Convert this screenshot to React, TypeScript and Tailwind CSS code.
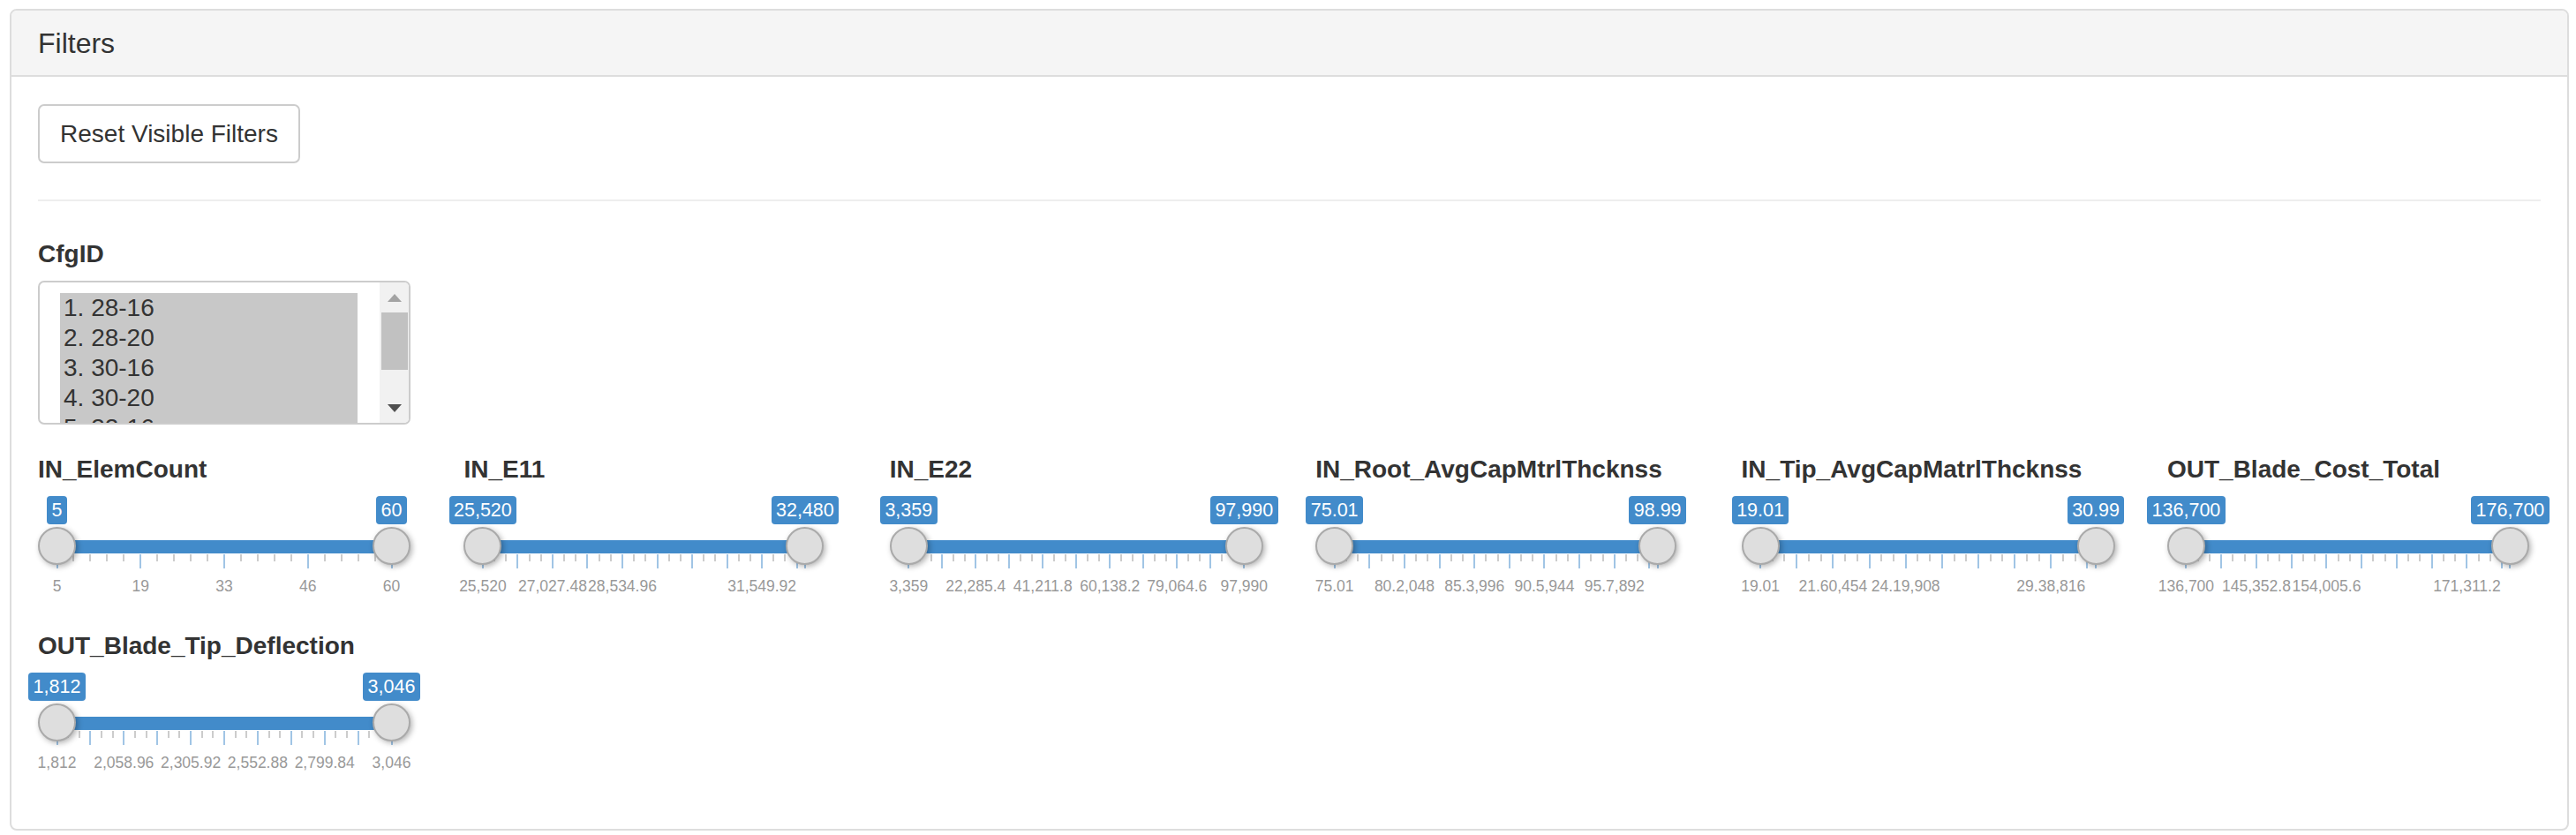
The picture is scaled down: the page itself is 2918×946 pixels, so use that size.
import React from 'react';

type SliderDef = {
  name: string;
  w: number;
  from: string;
  to: string;
  majors: number[];
  minor: number;
  labels: string[];
};

// big tick positions as fractions of the track
const EVEN10 = Array.from({ length: 11 }, (_, k) => k / 10);
const PARTIAL = [...Array.from({ length: 10 }, (_, k) => k * 0.1083), 1];

const SLIDERS: SliderDef[] = [
  { name: 'IN_ElemCount', w: 422, from: '5', to: '60', majors: [0, 0.25, 0.5, 0.75, 1], minor: 4, labels: ['5', '19', '33', '46', '60'] },
  { name: 'IN_E11', w: 408, from: '25,520', to: '32,480', majors: PARTIAL, minor: 2, labels: ['25,520', '', '27,027.48', '', '28,534.96', '', '', '', '31,549.92', '', ''] },
  { name: 'IN_E22', w: 423, from: '3,359', to: '97,990', majors: EVEN10, minor: 2, labels: ['3,359', '', '22,285.4', '', '41,211.8', '', '60,138.2', '', '79,064.6', '', '97,990'] },
  { name: 'IN_Root_AvgCapMtrlThcknss', w: 409, from: '75.01', to: '98.99', majors: PARTIAL, minor: 2, labels: ['75.01', '', '80.2,048', '', '85.3,996', '', '90.5,944', '', '95.7,892', '', ''] },
  { name: 'IN_Tip_AvgCapMatrlThcknss', w: 423, from: '19.01', to: '30.99', majors: PARTIAL, minor: 2, labels: ['19.01', '', '21.60,454', '', '24.19,908', '', '', '', '29.38,816', '', ''] },
  { name: 'OUT_Blade_Cost_Total', w: 410, from: '136,700', to: '176,700', majors: PARTIAL, minor: 2, labels: ['136,700', '', '145,352.8', '', '154,005.6', '', '', '', '171,311.2', '', ''] },
  { name: 'OUT_Blade_Tip_Deflection', w: 422, from: '1,812', to: '3,046', majors: EVEN10, minor: 2, labels: ['1,812', '', '2,058.96', '', '2,305.92', '', '2,552.88', '', '2,799.84', '', '3,046'] },
];

const OPTIONS = ['1. 28-16', '2. 28-20', '3. 30-16', '4. 30-20', '5. 32-16'];

function Badge({ text }: { text: string }) {
  // a 43px slot centred over its handle; a wider badge spills evenly to both sides
  return (
    <div className="flex w-[43px] justify-center">
      <div className="h-[32px] shrink-0 rounded-[4px] bg-[#428bca] px-[5.5px] text-[21.5px] leading-[32px] text-white whitespace-nowrap">
        {text}
      </div>
    </div>
  );
}

function Handle() {
  return <div className="relative z-10 h-[43px] w-[43px] rounded-full border-2 border-[#aaa] bg-[#dedede] shadow-[2px_2px_6px_rgba(0,0,0,0.3)]" />;
}

function RangeSlider({ s }: { s: SliderDef }) {
  const R = 21.5;
  const track = s.w - 2 * R;
  const x = (f: number) => R + f * track;
  const step = s.majors[1] - s.majors[0];
  const minors: number[] = [];
  for (let i = 0; i < s.majors.length - 1; i++) {
    for (let j = 1; j <= s.minor; j++) {
      const p = s.majors[i] + (step * j) / (s.minor + 1);
      if (p < s.majors[i + 1] - 0.001) minors.push(p);
    }
  }

  return (
    <div className="flex flex-col" style={{ width: s.w }}>
      <div className="mt-[2px] flex justify-between">
        <Badge text={s.from} />
        <Badge text={s.to} />
      </div>

      <div className="relative mt-[3px] flex justify-between">
        <div className="absolute top-[15px] h-[15px] bg-[#428bca]" style={{ left: R, width: track }} />
        {/* grid ticks sit under the handles */}
        <div className="absolute left-0 top-[31px] h-[16px] w-full">
          {minors.map((f, i) => (
            <div key={'m' + i} className="absolute top-0 h-[8px] w-[2px] bg-[#cccccc]" style={{ left: x(f) - 1 }} />
          ))}
          {s.majors.map((f, i) => (
            <div key={'M' + i} className="absolute top-0 h-[16px] w-[2px] bg-[#a1c5e5]" style={{ left: x(f) - 1 }} />
          ))}
        </div>
        <Handle />
        <Handle />
      </div>

      <div className="relative mt-[13.5px] h-[20px]">
        {s.majors.map((f, i) =>
          s.labels[i] ? (
            <div key={'l' + i} className="absolute top-0 -translate-x-1/2 text-[17.5px] leading-[20px] text-[#999] whitespace-nowrap" style={{ left: x(f) }}>
              {s.labels[i]}
            </div>
          ) : null
        )}
      </div>
    </div>
  );
}

function FakeListBox() {
  return (
    <div className="mt-[14px] flex h-[163px] w-[422px] overflow-hidden rounded-[7px] border-2 border-[#ccc] bg-white">
      <div className="flex-1 overflow-hidden pl-[23px] pr-[25px] pt-[12px]">
        {OPTIONS.map(o => (
          <div key={o} className="h-[34px] bg-[#c8c8c8] pl-[4px] text-[28px] leading-[34px] text-[#333] whitespace-nowrap">
            {o}
          </div>
        ))}
      </div>
      <div className="flex w-[33px] flex-col items-center bg-[#f1f1f1] pt-[13px]">
        <svg width="16" height="9" viewBox="0 0 16 9">
          <polygon points="8,0 16,9 0,9" fill="#a3a3a3" />
        </svg>
        <div className="mt-[12px] h-[65px] w-[30px] bg-[#c1c1c1]" />
        <svg className="mt-[39px]" width="16" height="9" viewBox="0 0 16 9">
          <polygon points="0,0 16,0 8,9" fill="#505050" />
        </svg>
      </div>
    </div>
  );
}

export default function App() {
  return (
    <div className="bg-white pl-[11px] pr-[8px] pt-[10px] pb-[4px] font-['Liberation_Sans',Arial,sans-serif] text-[#333]">
      <div className="overflow-hidden rounded-[8px] border-2 border-[#ddd] bg-white">
        <div className="flex h-[75px] items-center border-b-2 border-[#ddd] bg-[#f5f5f5] px-[30px] text-[32px]">
          Filters
        </div>

        <div className="px-[30px] pb-[59px] pt-[31px]">
          <button type="button" className="flex h-[67px] w-[297px] items-center justify-center rounded-[7px] border-2 border-[#ccc] bg-white text-[28px] text-[#333]">
            Reset Visible Filters
          </button>

          <div className="mt-[41px] h-[2px] bg-[#eee]" />

          <div className="mt-[44px] text-[28px] font-bold leading-[32px]">CfgID</div>
          <FakeListBox />

          <div className="mt-[35px] grid grid-cols-[repeat(6,482.4px)] gap-y-[36px]">
            {SLIDERS.map(s => (
              <div key={s.name} className="flex flex-col gap-[12px]">
                <div className="text-[28px] font-bold leading-[32px] whitespace-nowrap">{s.name}</div>
                <div className="h-[120px]">
                  <RangeSlider s={s} />
                </div>
              </div>
            ))}
          </div>
        </div>
      </div>
    </div>
  );
}
